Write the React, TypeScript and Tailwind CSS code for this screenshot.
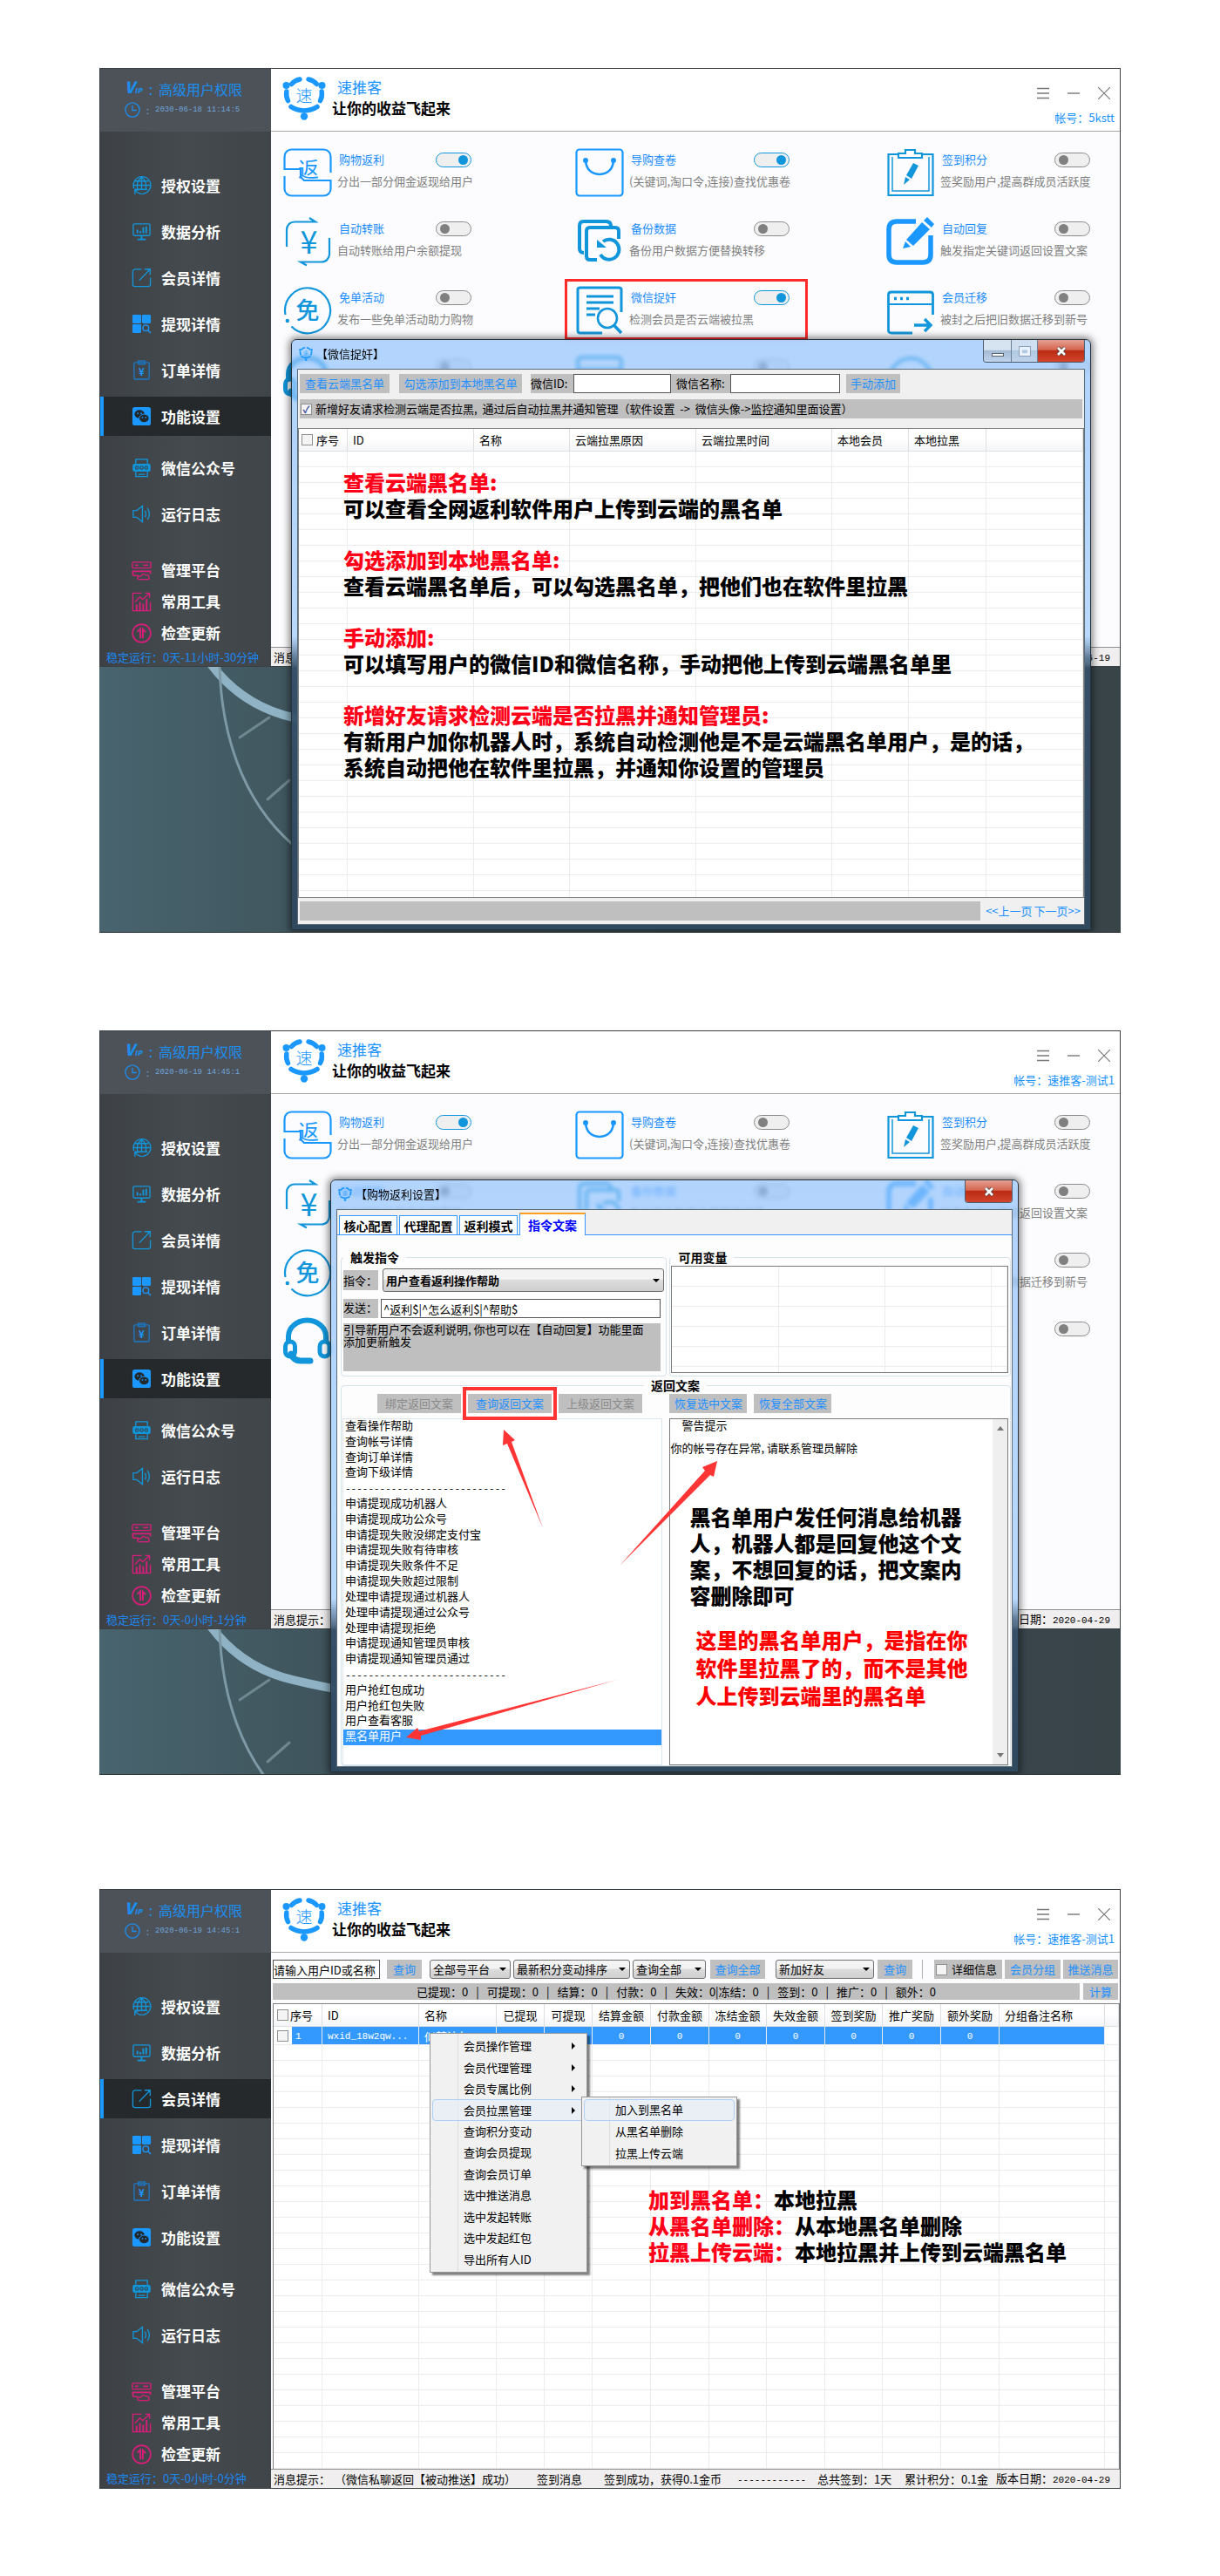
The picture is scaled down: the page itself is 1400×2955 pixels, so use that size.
import React from 'react';
import { clsx } from 'clsx';

type IconProps = { className?: string };

const BLUE = '#1296db';
const BRIGHT = '#1a98ff';

/* ---------- logo and side bar icons ---------- */

function Logo({ className }: IconProps) {
  return (
    <svg viewBox="0 0 50 50" className={className} fill="none" stroke={BRIGHT} strokeLinecap="round">
      <g fill={BRIGHT} stroke="none">
        <circle cx="4.5" cy="10" r="4" />
        <circle cx="45.5" cy="10" r="4" />
        <circle cx="25" cy="45.5" r="4.2" />
      </g>
      <g strokeWidth="5.5">
        <path d="M10.5 8.5Q14.5 4 20 3" />
        <path d="M39.5 8.5Q35.5 4 30 3" />
        <path d="M4.8 17Q4 23 6.5 27.5" />
        <path d="M45.2 17Q46 23 43.5 27.5" />
        <path d="M10 34.5Q16 38.5 25 39Q34 38.5 40 34.5" />
      </g>
      <text x="25" y="29" textAnchor="middle" fontSize="19" fontWeight="300" fill={BRIGHT} stroke="none">速</text>
    </svg>
  );
}

function SideSvg({ children, color = BRIGHT }: { children: React.ReactNode; color?: string }) {
  return (
    <svg viewBox="0 0 24 24" className="size-[23px] shrink-0" fill="none" stroke={color} strokeWidth="1.4">
      {children}
    </svg>
  );
}

const PINK = '#d81e7a';

const sideIcons = {
  globe: (
    <SideSvg color={BLUE}>
      <path d="M3 16A10.3 10.3 0 1 1 22 16Q20 21 13 22.5" />
      <path d="M2 12H22M4 7H20M12 2V18M12 2Q5 8 7 17M12 2Q19 8 17 17M4 17H19" />
      <path d="M4 23V17.5H9M4.5 18Q7 22 13 22.5" />
    </SideSvg>
  ),
  monitor: (
    <SideSvg color={BLUE}>
      <rect x="2" y="3" width="20" height="14" rx="1.5" />
      <path d="M7 14V10M10.5 14V11.5M14 14V7M17.5 14V6" strokeWidth="2" />
      <path d="M12 17V21M7 21.5H17" strokeWidth="2" />
    </SideSvg>
  ),
  member: (
    <SideSvg color={BLUE}>
      <path d="M12 2H4A2.5 2.5 0 0 0 1.5 4.5V20A2.5 2.5 0 0 0 4 22.5H20A2.5 2.5 0 0 0 22.5 20V12" />
      <path d="M9 15.5L22 2M15.5 1.8H22.2V8.5" />
    </SideSvg>
  ),
  blocks: (
    <SideSvg>
      <g fill={BRIGHT} stroke="none">
        <rect x="1" y="1" width="10.5" height="10.5" rx="1.5" />
        <rect x="12.5" y="1" width="10.5" height="10.5" rx="1.5" />
        <rect x="1" y="12.5" width="10.5" height="10.5" rx="1.5" />
      </g>
      <circle cx="17" cy="17" r="3.5" />
      <path d="M19.5 19.5L23 23" />
    </SideSvg>
  ),
  order: (
    <SideSvg color="#1b78c8">
      <rect x="3" y="3" width="18" height="20" rx="1" />
      <rect x="8" y="1" width="8" height="4" />
      <text x="12" y="18.5" textAnchor="middle" fontSize="12" fill="#1b98ff" stroke="none">¥</text>
    </SideSvg>
  ),
  wechat: (
    <SideSvg>
      <rect x="1" y="1" width="22" height="22" rx="3" fill={BRIGHT} stroke="none" />
      <ellipse cx="9.5" cy="9.5" rx="6" ry="5" fill="#22272a" stroke="none" />
      <ellipse cx="15" cy="14.5" rx="6" ry="5" fill="#22272a" stroke={BRIGHT} strokeWidth="1" />
      <g fill={BRIGHT} stroke="none">
        <circle cx="7.5" cy="8.5" r=".9" />
        <circle cx="11.5" cy="8.5" r=".9" />
        <circle cx="13" cy="13.5" r=".9" />
        <circle cx="17" cy="13.5" r=".9" />
      </g>
    </SideSvg>
  ),
  official: (
    <SideSvg color={BLUE}>
      <path d="M5 7V2H19V7M5 17V22.5H19V17M8 20H16" />
      <rect x="2" y="8" width="20" height="8" rx="1.5" fill={BLUE} />
      <g stroke="#2f4450" strokeWidth="1.2">
        <circle cx="6.5" cy="12" r="1.8" />
        <circle cx="12" cy="12" r="1.8" />
        <circle cx="17.5" cy="12" r="1.8" />
      </g>
    </SideSvg>
  ),
  sound: (
    <SideSvg color={BLUE}>
      <path d="M2 8H6L13 2.5V21.5L6 16H2Z" />
      <path d="M16 8Q18.5 12 16 16M19 5Q23.5 12 19 19" />
    </SideSvg>
  ),
  platform: (
    <SideSvg color={PINK}>
      <rect x="1" y="2" width="22" height="7" rx="1" />
      <path d="M4 5.5H8M14 5.5H20M8 18H3Q1.5 18 1.5 16V13H22.5V16" strokeWidth="1.8" />
      <path d="M9 22.5Q6 22 7.5 19.5Q9 18 11 19Q13 14.5 17 17.5Q21 17 20.5 20Q22.5 22.5 19 22.5Z" />
    </SideSvg>
  ),
  tools: (
    <SideSvg color={PINK}>
      <path d="M12 1.5H1.5V22.5H22.5V12" />
      <path d="M6 22V15M10 22V12M14 22V14M18 22V8" strokeWidth="2" />
      <path d="M4 12L10 6L13 9L21 2M16.5 1.5H21.5V7" />
    </SideSvg>
  ),
  update: (
    <SideSvg color={PINK}>
      <circle cx="12" cy="12" r="10.8" strokeWidth="1.7" />
      <path d="M7 10L10.5 6.5V18M13.5 18V7L17 10.5" strokeWidth="2" />
    </SideSvg>
  ),
};

const navGroups: { className: string; itemClass: string; items: { label: string; icon: keyof typeof sideIcons }[] }[] = [
  {
    className: 'gap-2 pt-[39px]',
    itemClass: 'h-[45px]',
    items: [
      { label: '授权设置', icon: 'globe' },
      { label: '数据分析', icon: 'monitor' },
      { label: '会员详情', icon: 'member' },
      { label: '提现详情', icon: 'blocks' },
      { label: '订单详情', icon: 'order' },
      { label: '功能设置', icon: 'wechat' },
    ],
  },
  {
    className: 'gap-2 pt-[14px]',
    itemClass: 'h-[45px]',
    items: [
      { label: '微信公众号', icon: 'official' },
      { label: '运行日志', icon: 'sound' },
    ],
  },
  {
    className: 'pt-6',
    itemClass: 'h-9',
    items: [
      { label: '管理平台', icon: 'platform' },
      { label: '常用工具', icon: 'tools' },
      { label: '检查更新', icon: 'update' },
    ],
  },
];

function Sidebar({ active, time, uptime }: { active: string; time: string; uptime: string }) {
  return (
    <aside className="flex w-[196px] shrink-0 flex-col bg-[linear-gradient(90deg,#3d4145,#444a4e_50%,#404549)]">
      <div className="flex h-[72px] flex-col justify-center gap-px bg-[#4d5258] pb-2 pl-7">
        <div className="flex items-center text-[16px] leading-6 text-[#1b8ef0]">
          <span className="w-[21px] text-[18px] font-black italic leading-6">
            V<span className="text-[8px]">IP</span>
          </span>
          <span className="w-[18px] text-center">:</span>
          <span>高级用户权限</span>
        </div>
        <div className="flex items-center text-[#6fa3d8]">
          <svg viewBox="0 0 20 20" className="size-[18px]" fill="none" stroke="#1b8ef0" strokeWidth="1.5">
            <circle cx="10" cy="10" r="9" />
            <path d="M10 4.5V10.5H15" />
          </svg>
          <span className="w-[17px] text-center text-[11px] leading-4">:</span>
          <span className="font-['Liberation_Mono',monospace] text-[9px] leading-4">{time}</span>
        </div>
      </div>
      <nav>
        {navGroups.map((group, i) => (
          <div key={i} className={clsx('flex flex-col', group.className)}>
            {group.items.map(item => (
              <button
                key={item.label}
                className={clsx(
                  'flex items-center gap-[11px] border-l-4 pl-8 text-[17px] font-bold leading-6 text-white',
                  group.itemClass,
                  item.label === active ? 'border-[#1a98ff] bg-[#25292c]' : 'border-transparent'
                )}
              >
                {sideIcons[item.icon]}
                {item.label}
              </button>
            ))}
          </div>
        ))}
      </nav>
      <p className="h-5 pl-[7px] text-[13px] leading-5 whitespace-nowrap text-[#1a86f0]">稳定运行：{uptime}</p>
    </aside>
  );
}

/* ---------- program window ---------- */

interface AppWindowProps {
  active: string;
  time: string;
  uptime: string;
  account: string;
  status: React.ReactNode;
  children: React.ReactNode;
}

function AppWindow({ active, time, uptime, account, status, children }: AppWindowProps) {
  return (
    <div className="flex border border-[#3a3f43] bg-[#fcfcfe]">
      <Sidebar active={active} time={time} uptime={uptime} />
      <div className="flex min-w-0 flex-1 flex-col">
        <header className="flex h-[72px] shrink-0 items-start border-b border-[#a9a9a9] bg-white pt-[9px] pr-[6px] pl-[13px]">
          <Logo className="size-[50px]" />
          <div className="ml-[7px] flex-1">
            <p className="pl-1.5 text-[17px] leading-6 text-[#1a93ff]">速推客</p>
            <p className="text-[17px] font-bold leading-6 text-black">让你的收益飞起来</p>
          </div>
          <div className="flex flex-col items-end">
            <div className="flex items-center gap-[21px] pt-3 pr-[5px]">
              <button aria-label="菜单">
                <svg viewBox="0 0 14 14" className="size-[14px]" stroke="#777" strokeWidth="1.4">
                  <path d="M0 1.5H14M0 7H14M0 12.5H14" />
                </svg>
              </button>
              <button aria-label="最小化">
                <svg viewBox="0 0 14 14" className="size-[14px]" stroke="#777" strokeWidth="1.4">
                  <path d="M0 7H14" />
                </svg>
              </button>
              <button aria-label="关闭">
                <svg viewBox="0 0 14 14" className="size-[14px]" stroke="#777" strokeWidth="1.2">
                  <path d="M0 0L14 14M14 0L0 14" />
                </svg>
              </button>
            </div>
            <p className="mt-[11px] text-[13px] leading-5 text-[#1a93ff]">帐号：{account}</p>
          </div>
        </header>
        <main className="relative min-h-0 flex-1">{children}</main>
        <footer className="flex h-[22px] shrink-0 items-center border-t border-[#8f8f8f] bg-[#f0eeee] pr-[11px] pl-[3px] text-[13px] leading-5 whitespace-pre text-black">
          {status}
        </footer>
      </div>
    </div>
  );
}

function Mono({ children }: { children: React.ReactNode }) {
  return <span className="font-['Liberation_Mono',monospace] text-[11px]">{children}</span>;
}

/* ---------- feature list ---------- */

function FeatureSvg({ children, color = BLUE }: { children?: React.ReactNode; color?: string }) {
  return (
    <svg viewBox="0 0 56 56" className="size-14 shrink-0" fill="none" stroke={color} strokeWidth="2.2">
      {children}
    </svg>
  );
}

const featureIcons = {
  rebate: (
    <FeatureSvg color={BRIGHT}>
      <path d="M54.5 28V10A8 8 0 0 0 46.5 1.5H9.5A8 8 0 0 0 1.5 10V24H20V34" />
      <path d="M1.5 32V47A8 8 0 0 0 9.5 54.5H46.5A8 8 0 0 0 54.5 47V37H24L20 33" />
      <text x="29" y="33" textAnchor="middle" fontSize="24" fill={BRIGHT} stroke="none">返</text>
    </FeatureSvg>
  ),
  transfer: (
    <FeatureSvg>
      <path d="M4 34V15A9 9 0 0 1 13 5.5H37L30 1" />
      <path d="M53 24V42A9 9 0 0 1 44 51.5H20L27 55.5" />
      <text x="29.5" y="42" textAnchor="middle" fontSize="36" fill={BLUE} stroke="none">¥</text>
    </FeatureSvg>
  ),
  free: (
    <FeatureSvg>
      <path d="M2.5 33A26 26 0 1 1 9.5 46.5" />
      <circle cx="4.8" cy="40" r="2.2" fill={BLUE} stroke="none" />
      <text x="28" y="38" textAnchor="middle" fontSize="27" fontWeight="500" fill={BLUE} stroke="none">免</text>
    </FeatureSvg>
  ),
  headset: (
    <FeatureSvg>
      <path d="M6 30V22A21 18 0 0 1 49 22V30" strokeWidth="6" />
      <rect x="2.5" y="28" width="11" height="17" rx="5.5" strokeWidth="5" />
      <rect x="42" y="28" width="11" height="17" rx="5.5" strokeWidth="5" />
      <path d="M9 42Q12 50 20 50H31" strokeWidth="7" strokeLinecap="round" />
    </FeatureSvg>
  ),
  bag: (
    <FeatureSvg color={BRIGHT}>
      <rect x="1.5" y="1.5" width="53" height="53" rx="3.5" />
      <path d="M12 14Q13 29 28 30Q43 29 44 14" strokeWidth="2.6" />
      <circle cx="12" cy="14" r="3" fill={BRIGHT} stroke="none" />
      <circle cx="44" cy="14" r="3" fill={BRIGHT} stroke="none" />
    </FeatureSvg>
  ),
  backup: (
    <FeatureSvg>
      <path d="M10 41Q5 41 5 36V10Q5 5 10 5H35Q41 5 41 10" strokeWidth="4" />
      <path d="M25 49H17Q13 49 13 45V16Q13 12 17 12H46Q50 12 50 16V25" strokeWidth="4" />
      <path d="M29 43A11.5 11.5 0 1 0 32 28" strokeWidth="4" />
      <path d="M25 26V35H36Z" fill={BLUE} stroke="none" />
    </FeatureSvg>
  ),
  catchSpy: (
    <FeatureSvg>
      <path d="M31 54H6Q3 54 3 51V4Q3 2 6 2H50Q53 2 53 4V30" strokeWidth="3" />
      <path d="M13 12H44M13 19H44M13 26H28M13 33H23" strokeWidth="3" />
      <circle cx="37" cy="37" r="11" strokeWidth="2.6" />
      <path d="M44.5 45L53 54" strokeWidth="3.5" />
    </FeatureSvg>
  ),
  browser: (
    <FeatureSvg>
      <rect x="3" y="3" width="50" height="48" rx="4" strokeWidth="4" />
      <path d="M3 16H53" strokeWidth="3" />
    </FeatureSvg>
  ),
  signIn: (
    <FeatureSvg>
      <path d="M14 7H2.5V54H53.5V7H41" />
      <path d="M7 10V49H49V10" strokeWidth="1.5" />
      <path d="M14 11V6H22V2H33V6H41V11Z" fill="#fff" />
      <g fill={BLUE} stroke="none">
        <path d="M31 17L37 20L29 35L23 31Z" />
        <path d="M22 33L27 36L20 42Z" />
      </g>
    </FeatureSvg>
  ),
  reply: (
    <FeatureSvg color={BRIGHT}>
      <path d="M34 5H12Q3 5 3 14V43Q3 52 12 52H42Q51 52 51 43V21" strokeWidth="5.5" />
      <g fill={BRIGHT} stroke="none">
        <path d="M41 6L50 14L31 33L23 26Z" />
        <path d="M43 4L47 0L55 8L52 12Z" />
        <path d="M22 28L28 34L19 36Z" />
      </g>
    </FeatureSvg>
  ),
  move: (
    <FeatureSvg>
      <path d="M30 54H6Q2.5 54 2.5 51V10Q2.5 7 6 7H50Q53.5 7 53.5 10V33" strokeWidth="2.8" />
      <path d="M3 21H53" />
      <path d="M9 14.5H12M16 14.5H19M23 14.5H26" strokeWidth="3.4" />
      <path d="M32 45H50M44 38L51 45L44 52" strokeWidth="3.4" />
    </FeatureSvg>
  ),
  ring: (
    <FeatureSvg>
      <circle cx="28" cy="28" r="24" strokeWidth="4" />
    </FeatureSvg>
  ),
};

interface Feature {
  icon: keyof typeof featureIcons;
  title?: string;
  desc?: string;
  on?: boolean;
}

const features: Feature[] = [
  { icon: 'rebate', title: '购物返利', desc: '分出一部分佣金返现给用户', on: true },
  { icon: 'bag', title: '导购查卷', desc: '(关键词,淘口令,连接)查找优惠卷', on: true },
  { icon: 'signIn', title: '签到积分', desc: '签奖励用户,提高群成员活跃度' },
  { icon: 'transfer', title: '自动转账', desc: '自动转账给用户余额提现' },
  { icon: 'backup', title: '备份数据', desc: '备份用户数据方便替换转移' },
  { icon: 'reply', title: '自动回复', desc: '触发指定关键词返回设置文案' },
  { icon: 'free', title: '免单活动', desc: '发布一些免单活动助力购物' },
  { icon: 'catchSpy', title: '微信捉奸', desc: '检测会员是否云端被拉黑', on: true },
  { icon: 'move', title: '会员迁移', desc: '被封之后把旧数据迁移到新号' },
  { icon: 'headset' },
  { icon: 'browser' },
  { icon: 'ring' },
];

const textWidths = ['w-[154px]', 'w-[184px]', 'w-[172px]'];

function FeatureGrid({ marked, off = [] }: { marked?: string; off?: string[] }) {
  return (
    <div className="grid grid-cols-[335fr_357fr_268fr] pt-[19px] pl-[14px]">
      {features.map((f, i) => (
        <div key={f.icon} className="relative flex h-[79px] gap-[6px]">
          {featureIcons[f.icon]}
          <div className={clsx('shrink-0', textWidths[i % 3])}>
            <label className="flex h-[26px] items-center justify-between pl-0.5 text-[13px] leading-5 text-[#1a8cff]">
              <span>{f.title}</span>
              <input
                type="checkbox"
                aria-label={f.title ?? '开关'}
                defaultChecked={f.on && !off.includes(f.icon)}
                className="relative h-[17px] w-[41px] appearance-none rounded-full border border-[#8a8a8a] bg-[#efefef] before:absolute before:top-[2px] before:left-[4px] before:size-[11px] before:rounded-full before:bg-[#808080] checked:border-[#1296db] checked:before:left-[25px] checked:before:bg-[#1296db]"
              />
            </label>
            <p className="text-[13px] leading-6 whitespace-nowrap text-[#808080]">{f.desc}</p>
          </div>
          {marked === f.icon && <span className="absolute -top-2 -left-3 h-[70px] w-[279px] border-[3px] border-[#ff2a2a]" />}
        </div>
      ))}
    </div>
  );
}

/* ---------- desktop and glass dialogs ---------- */

function Wallpaper() {
  return (
    <svg
      viewBox="0 0 270 300"
      className="absolute top-[687px] left-0 h-[300px] w-[270px]"
      fill="none"
      strokeLinecap="round"
      aria-hidden="true"
    >
      <path d="M126 -6Q162 44 222 58T290 70" stroke="#8fb3c4" strokeWidth="10" strokeLinecap="butt" />
      <path d="M138 0C140 70 160 150 222 204" stroke="#7d99a5" strokeWidth="3" />
      <path d="M195 58L161 81M218 130L193 152" stroke="#6f8790" strokeWidth="3" />
    </svg>
  );
}

function Desktop({ className, children }: { className?: string; children: React.ReactNode }) {
  return (
    <section
      className={clsx(
        'relative overflow-hidden border-b border-[#20282c] bg-[linear-gradient(90deg,#48646e,#3e525a_25%,#39464d_80%,#394449)]',
        className
      )}
    >
      <Wallpaper />
      <div className="relative h-full">{children}</div>
    </section>
  );
}

interface DialogProps {
  title: string;
  className: string;
  resizable?: boolean;
  children: React.ReactNode;
}

function Dialog({ title, className, resizable, children }: DialogProps) {
  return (
    <div
      role="dialog"
      aria-label={title}
      className={clsx(
        'absolute flex flex-col rounded-t-md border border-[#26323c] px-[6px] pb-[5px] shadow-[0_0_8px_2px_#00000080] backdrop-blur-[2px]',
        className
      )}
    >
      <div className="flex h-[33px] shrink-0 items-start">
        <Logo className="mt-2 ml-0.5 size-4" />
        <span className="mt-1.5 ml-1 flex-1 text-[13px] leading-5 text-black">【{title}】</span>
        <div className="flex h-[26px] overflow-hidden rounded-b border border-t-0 border-[#4e5e70]">
          {resizable && (
            <>
              <button aria-label="最小化" className="flex w-8 items-end justify-center border-r border-[#6b7f95] bg-[linear-gradient(#d6e3f1_45%,#a5bbd4_50%,#bfd4ec)] pb-1.5">
                <span className="h-1 w-3.5 border border-[#59636e] bg-white" />
              </button>
              <button aria-label="最大化" className="flex w-[30px] items-center justify-center border-r border-[#6b7f95] bg-[linear-gradient(#cfdff0_45%,#b0c8e2_50%,#bfd4ec)]">
                <span className="h-[10px] w-3 border-[3px] border-[#e9f1fa] outline outline-[#8ba0b8]" />
              </button>
            </>
          )}
          <button aria-label="关闭" className="flex w-[53px] items-center justify-center bg-[linear-gradient(#e5a093,#d5654f_45%,#bc2b13_50%,#d0452c)]">
            <svg viewBox="0 0 14 12" className="h-3 w-3.5">
              <path d="M3 2L11 10M11 2L3 10" stroke="#4b3b3b" strokeWidth="4.5" />
              <path d="M3 2L11 10M11 2L3 10" stroke="#fff" strokeWidth="2.8" />
            </svg>
          </button>
        </div>
      </div>
      <div className="flex min-h-0 flex-1 flex-col border border-[#5d6b78] bg-[#f0f0f0]">{children}</div>
    </div>
  );
}

function FlatButton({ className, disabled, children }: { className?: string; disabled?: boolean; children: React.ReactNode }) {
  return (
    <button
      disabled={disabled}
      className={clsx(
        'h-[22px] shrink-0 bg-[#bfbfbf] text-[13px] leading-5 whitespace-nowrap',
        disabled ? 'text-[#8a8a8a]' : 'text-[#1e90ff]',
        className
      )}
    >
      {children}
    </button>
  );
}

function CheckBox({ label, checked }: { label: string; checked?: boolean }) {
  return (
    <input
      type="checkbox"
      aria-label={label}
      defaultChecked={checked}
      className="size-[13px] shrink-0 appearance-none border border-[#8e8f8f] bg-[#f4f4f4] text-center text-[11px] leading-[11px] font-bold text-[#31479e] checked:before:block checked:before:content-['✓']"
    />
  );
}

/* ---------- 微信捉奸 dialog ---------- */

const cloudColumns = [
  { label: '序号', width: 'w-[56px]' },
  { label: 'ID', width: 'w-[145px]' },
  { label: '名称', width: 'w-[110px]' },
  { label: '云端拉黑原因', width: 'w-[145px]' },
  { label: '云端拉黑时间', width: 'w-[156px]' },
  { label: '本地会员', width: 'w-[88px]' },
  { label: '本地拉黑', width: 'w-[89px]' },
  { label: '', width: '' },
];

const headCell = 'h-[26px] border-r border-b border-[#dedfe1] bg-[linear-gradient(#fff_45%,#f4f5f8)] p-0 font-normal';
const bodyCell = 'h-[18px] border-r border-b border-[#ececec] p-0';

const notes = [
  { head: '查看云端黑名单:', body: ['可以查看全网返利软件用户上传到云端的黑名单'] },
  { head: '勾选添加到本地黑名单:', body: ['查看云端黑名单后，可以勾选黑名单，把他们也在软件里拉黑'] },
  { head: '手动添加:', body: ['可以填写用户的微信ID和微信名称，手动把他上传到云端黑名单里'] },
  {
    head: '新增好友请求检测云端是否拉黑并通知管理员:',
    body: ['有新用户加你机器人时，系统自动检测他是不是云端黑名单用户，是的话，', '系统自动把他在软件里拉黑，并通知你设置的管理员'],
  },
];

function BlacklistDialog() {
  return (
    <Dialog
      title="微信捉奸"
      resizable
      className="top-[311px] right-[34px] bottom-[2px] left-[220px] bg-[linear-gradient(#90c2fcb0_0,#a8cffcd0_340px,#35506ae8_376px,#2f495f)]"
    >
      <div className="flex items-center px-0.5 pt-[5px] text-[13px] leading-5 text-black">
        <FlatButton className="w-[103px]">查看云端黑名单</FlatButton>
        <FlatButton className="ml-[11px] w-[141px]">勾选添加到本地黑名单</FlatButton>
        <label className="ml-[10px] flex h-[22px] items-center bg-[#bfbfbf]">
          <span className="w-[49px]">微信ID:</span>
          <input className="h-[22px] w-[112px] border border-[#555] bg-white px-1" />
        </label>
        <label className="flex h-[22px] items-center bg-[#bfbfbf]">
          <span className="w-[68px] pl-1.5">微信名称:</span>
          <input className="h-[22px] w-[126px] border border-[#555] bg-white px-1" />
        </label>
        <FlatButton className="ml-[7px] w-[62px]">手动添加</FlatButton>
      </div>
      <label className="mx-0.5 mt-[7px] flex h-[22px] items-center gap-1 bg-[#bfbfbf] pl-px text-[13px] leading-5 whitespace-pre text-black">
        <CheckBox label="自动拉黑" checked />
        新增好友请求检测云端是否拉黑,  通过后自动拉黑并通知管理（软件设置  -&gt;  微信头像-&gt;监控通知里面设置）
      </label>
      <div className="relative mt-[11px] min-h-0 flex-1 overflow-hidden border border-[#7f8183] bg-white">
        <table className="w-full table-fixed border-separate border-spacing-0 text-left text-[13px] leading-5 text-black">
          <thead>
            <tr>
              {cloudColumns.map((c, i) => (
                <th key={i} className={clsx(headCell, c.width, i === 0 ? 'pl-[3px]' : 'pl-1.5')}>
                  {i === 0 ? (
                    <span className="flex items-center gap-1">
                      <CheckBox label="全选" />
                      {c.label}
                    </span>
                  ) : (
                    c.label
                  )}
                </th>
              ))}
            </tr>
          </thead>
          <tbody>
            {Array.from({ length: 29 }, (_, r) => (
              <tr key={r}>
                {cloudColumns.map((_c, i) => (
                  <td key={i} className={bodyCell} />
                ))}
              </tr>
            ))}
          </tbody>
        </table>
        <div className="absolute top-[46px] left-[51px] flex flex-col gap-[29px] text-[24px] leading-[30px] font-black whitespace-nowrap text-black">
          {notes.map(n => (
            <div key={n.head}>
              <p className="text-[#ff0018]">{n.head}</p>
              {n.body.map(line => (
                <p key={line}>{line}</p>
              ))}
            </div>
          ))}
        </div>
      </div>
      <div className="flex shrink-0 items-center gap-1.5 py-1 pr-1 pl-0.5 text-[13px] leading-5">
        <span className="h-[22px] flex-1 bg-[#bfbfbf]" />
        <span className="flex gap-0.5 whitespace-nowrap text-[#1e90ff]">
          <a href="#prev">&lt;&lt;上一页</a>
          <a href="#next">下一页&gt;&gt;</a>
        </span>
      </div>
    </Dialog>
  );
}

/* ---------- 购物返利设置 dialog ---------- */

const dashes = '----------------------------';

const replies = [
  '查看操作帮助',
  '查询帐号详情',
  '查询订单详情',
  '查询下级详情',
  dashes,
  '申请提现成功机器人',
  '申请提现成功公众号',
  '申请提现失败没绑定支付宝',
  '申请提现失败有待审核',
  '申请提现失败条件不足',
  '申请提现失败超过限制',
  '处理申请提现通过机器人',
  '处理申请提现通过公众号',
  '处理申请提现拒绝',
  '申请提现通知管理员审核',
  '申请提现通知管理员通过',
  dashes,
  '用户抢红包成功',
  '用户抢红包失败',
  '用户查看客服',
  '黑名单用户',
];

const groupBox = 'min-w-0 rounded border border-[#d5e3ea]';
const groupTitle = 'px-2 text-[14px] leading-5 font-bold text-black';

function Select({ label, options, className }: { label: string; options: string[]; className?: string }) {
  return (
    <span className={clsx('relative shrink-0', className)}>
      <select
        aria-label={label}
        className="size-full appearance-none rounded-[3px] border border-[#707070] bg-[linear-gradient(#f3f3f3_45%,#dcdcdc_50%,#cfcfcf)] pl-[3px] leading-5 text-black"
      >
        {options.map(o => (
          <option key={o}>{o}</option>
        ))}
      </select>
      <svg viewBox="0 0 8 4" className="pointer-events-none absolute top-1/2 right-[5px] -mt-0.5 h-1 w-2">
        <path d="M0 0H8L4 4Z" />
      </svg>
    </span>
  );
}

function RebateDialog() {
  return (
    <Dialog
      title="购物返利设置"
      className="top-[171px] right-[117px] bottom-[2px] left-[265px] bg-[linear-gradient(#90c2fcb0_0,#a8cffcd0_480px,#35506ae8_516px,#2f495f)]"
    >
      <div role="tablist" className="flex h-[29px] shrink-0 items-end border-b border-[#3399ff] pl-0.5 text-[14px] leading-5 font-bold text-black">
        {['核心配置', '代理配置', '返利模式'].map(t => (
          <button key={t} role="tab" className="mr-0.5 h-[22px] w-[67px] border border-b-0 border-[#3399ff] bg-white">
            {t}
          </button>
        ))}
        <button
          role="tab"
          aria-selected
          className="-mb-px h-[26px] w-[76px] border border-t-2 border-b-0 border-[#3399ff] border-t-[#ffa020] bg-white text-[#0000ff]"
        >
          指令文案
        </button>
      </div>
      <div className="flex min-h-0 flex-1 flex-col bg-[#fdfdfe] pt-[15px] pr-px pl-1">
        <div className="grid shrink-0 grid-cols-[374fr_391fr] gap-[3px] text-[13px] leading-5 text-black">
          <fieldset className={clsx(groupBox, 'px-0.5 pb-1')}>
            <legend className={groupTitle}>触发指令</legend>
            <div className="flex items-center gap-[5px] pt-[3px]">
              <span className="h-[23px] w-10 bg-[#bfbfbf] leading-[23px]">指令：</span>
              <Select label="指令" options={['用户查看返利操作帮助']} className="h-[27px] flex-1 font-bold" />
            </div>
            <label className="mt-2 flex gap-[3px] pr-1">
              <span className="h-[22px] w-10 bg-[#bfbfbf]">发送：</span>
              <input defaultValue="^返利$|^怎么返利$|^帮助$" className="h-[22px] min-w-0 flex-1 border border-[#555] bg-white px-0.5" />
            </label>
            <p className="mt-1.5 mr-1 h-[55px] bg-[#bfbfbf] text-[13px] leading-[14px]">
              引导新用户不会返利说明, 你也可以在【自动回复】功能里面
              <br />
              添加更新触发
            </p>
          </fieldset>
          <fieldset className={clsx(groupBox, 'pr-0.5 pb-[3px] pl-px')}>
            <legend className={groupTitle}>可用变量</legend>
            <div className="h-[123px] overflow-hidden border border-[#7b7b7b] bg-white">
              <table className="w-full table-fixed border-separate border-spacing-0">
                <tbody>
                  {Array.from({ length: 6 }, (_, r) => (
                    <tr key={r}>
                      {['w-[123px]', 'w-[122px]', 'w-[122px]', ''].map((w, i) => (
                        <td key={i} className={clsx('h-[23px] border-r border-b border-[#ececec] p-0', w)} />
                      ))}
                    </tr>
                  ))}
                </tbody>
              </table>
            </div>
          </fieldset>
        </div>
        <fieldset className={clsx(groupBox, 'grid flex-1 grid-cols-[367fr_388fr] grid-rows-[22px_398px] gap-x-2 gap-y-1.5 pr-0.5 pl-px')}>
          <legend className={clsx(groupTitle, 'mx-auto')}>返回文案</legend>
          <div className="flex gap-2 pl-10">
            <FlatButton disabled className="w-24">绑定返回文案</FlatButton>
            <span className="relative flex">
              <FlatButton className="w-24">查询返回文案</FlatButton>
              <span className="absolute -inset-x-1.5 -inset-y-2 border-4 border-[#ff3434]" />
            </span>
            <FlatButton disabled className="w-24">上级返回文案</FlatButton>
          </div>
          <div className="flex gap-2">
            <FlatButton className="w-[89px]">恢复选中文案</FlatButton>
            <FlatButton className="w-[89px]">恢复全部文案</FlatButton>
          </div>
          <div className="border border-[#dde6ec] bg-white">
            <ul role="listbox" aria-label="返回文案" className="grid h-[374px] auto-rows-fr text-[13px] leading-[14px] text-black">
              {replies.map((r, i) => (
                <li
                  key={i}
                  role="option"
                  aria-selected={i === 20}
                  className={clsx('pl-0.5', i === 20 && 'bg-[#3399ff] text-white')}
                >
                  {r === dashes ? <Mono>{r}</Mono> : r}
                </li>
              ))}
            </ul>
          </div>
          <div className="relative flex border border-[#7b7b7b] bg-white">
            <p className="flex-1 text-[13px] leading-[27px] text-black">
              <span className="block h-[19px] pl-[13px] leading-[14px]">警告提示</span>
              你的帐号存在异常, 请联系管理员解除
            </p>
            <span className="flex w-[17px] flex-col items-center justify-between bg-[#efefef] py-2">
              <svg viewBox="0 0 8 5" className="h-[5px] w-2" fill="#777"><path d="M0 5H8L4 0Z" /></svg>
              <svg viewBox="0 0 8 5" className="h-[5px] w-2" fill="#777"><path d="M0 0H8L4 5Z" /></svg>
            </span>
            <div className="absolute top-[97px] left-[22px] text-[24px] font-black whitespace-nowrap">
              <p className="leading-[30px] text-black">
                黑名单用户发任何消息给机器<br />
                人，机器人都是回复他这个文<br />
                案，不想回复的话，把文案内<br />
                容删除即可
              </p>
              <p className="mt-5 pl-[7px] leading-8 text-[#ff0000]">
                这里的黑名单用户，是指在你<br />
                软件里拉黑了的，而不是其他<br />
                人上传到云端里的黑名单
              </p>
            </div>
          </div>
        </fieldset>
      </div>
      <svg className="pointer-events-none absolute inset-0 size-full" fill="#ff3434" aria-hidden="true">
        <path d="M198 286L211 298L207 300L243 399L202 302L197 304Z" />
        <path d="M443 322L439 340L435 338L331 442L429 333L426 329Z" />
        <path d="M86 639L99 628L101 632L328 573L103 637L103 642Z" />
      </svg>
    </Dialog>
  );
}

/* ---------- member page ---------- */

const memberColumns = [
  { label: '序号', width: 'w-[56px]' },
  { label: 'ID', width: 'w-[111px]', left: true },
  { label: '名称', width: 'w-[89px]', left: true },
  { label: '已提现', width: 'w-[55px]' },
  { label: '可提现', width: 'w-[55px]' },
  { label: '结算金额', width: 'w-[67px]' },
  { label: '付款金额', width: 'w-[67px]' },
  { label: '冻结金额', width: 'w-[66px]' },
  { label: '失效金额', width: 'w-[67px]' },
  { label: '签到奖励', width: 'w-[66px]' },
  { label: '推广奖励', width: 'w-[67px]' },
  { label: '额外奖励', width: 'w-[67px]' },
  { label: '分组备注名称', width: 'w-[121px]', left: true },
  { label: '', width: '' },
];

const member = ['1', 'wxid_18w2qw...', '似梦流年', '0', '0', '0', '0', '0', '0', '0', '0', '0', ''];

const totals = ['已提现：0', '可提现：0', '结算：0', '付款：0', '失效：0|冻结：0', '签到：0', '推广：0', '额外：0'];

const menuItems = [
  '会员操作管理',
  '会员代理管理',
  '会员专属比例',
  '会员拉黑管理',
  '查询积分变动',
  '查询会员提现',
  '查询会员订单',
  '选中推送消息',
  '选中发起转账',
  '选中发起红包',
  '导出所有人ID',
];

const menuBox = 'absolute border border-[#979797] bg-[linear-gradient(90deg,#f1f1f1_31px,#dcdcdc_31px,#dcdcdc_32px,#f1f1f1_32px)] p-0.5 text-[13px] leading-5 text-black shadow-[3px_3px_2px_#00000080]';

function ContextMenu() {
  return (
    <>
      <ul role="menu" className={clsx(menuBox, 'top-[92px] left-[182px] grid h-[275px] w-[181px] auto-rows-fr')}>
        {menuItems.map((m, i) => (
          <li key={m} className="grid">
            <button
              role="menuitem"
              className={clsx(
                'flex items-center justify-between rounded-sm border pr-2.5 pl-[35px]',
                i === 3 ? 'border-[#aecff7] bg-[#e6eefa99]' : 'border-transparent'
              )}
            >
              {m}
              {i < 4 && (
                <svg viewBox="0 0 4 8" className="h-2 w-1"><path d="M0 0V8L4 4Z" /></svg>
              )}
            </button>
          </li>
        ))}
      </ul>
      <ul role="menu" className={clsx(menuBox, 'top-[165px] left-[356px] grid h-[80px] w-[179px] auto-rows-fr')}>
        {['加入到黑名单', '从黑名单删除', '拉黑上传云端'].map((m, i) => (
          <li key={m} className="grid">
            <button
              role="menuitem"
              className={clsx('flex items-center rounded-sm border pl-[35px]', i === 0 ? 'border-[#aecff7] bg-[#e6eefa99]' : 'border-transparent')}
            >
              {m}
            </button>
          </li>
        ))}
      </ul>
    </>
  );
}

function MemberPage() {
  return (
    <div className="flex h-full flex-col pt-2 pl-0.5 text-[13px] leading-5 text-black">
      <div className="flex items-center pr-[2px]">
        <input aria-label="用户" defaultValue="请输入用户ID或名称" className="h-[22px] w-[123px] border border-[#555] bg-white" />
        <FlatButton className="ml-2 w-10">查询</FlatButton>
        <Select label="平台" options={['全部号平台']} className="ml-[9px] h-[22px] w-[93px]" />
        <Select label="排序" options={['最新积分变动排序']} className="ml-[3px] h-[22px] w-[134px]" />
        <Select label="范围" options={['查询全部']} className="ml-[3px] h-[22px] w-[84px]" />
        <FlatButton className="ml-[5px] w-[63px]">查询全部</FlatButton>
        <Select label="好友" options={['新加好友']} className="ml-3 h-[22px] w-[113px]" />
        <FlatButton className="ml-1 w-10">查询</FlatButton>
        <span className="ml-[11px] h-[22px] w-px bg-[#b0b0b0]" />
        <label className="ml-auto flex h-[22px] w-[78px] items-center gap-[5px] bg-[#bfbfbf] pl-0.5">
          <CheckBox label="详细信息" />
          详细信息
        </label>
        <FlatButton className="ml-[3px] w-16">会员分组</FlatButton>
        <FlatButton className="ml-[3px] w-[63px]">推送消息</FlatButton>
      </div>
      <div className="mt-[5px] flex gap-1 pr-[2px] leading-[19px]">
        <div className="flex h-[19px] flex-1 justify-center gap-[9px] bg-[#bfbfbf]">
          {totals.map((t, i) => (
            <React.Fragment key={t}>
              {i > 0 && <span>|</span>}
              <span>{t}</span>
            </React.Fragment>
          ))}
        </div>
        <button className="h-[19px] w-10 bg-[#bfbfbf] text-[#1e90ff]">计算</button>
      </div>
      <div className="mt-1 min-h-0 flex-1 border border-b-0 border-[#7f8183] bg-white">
        <table className="w-full table-fixed border-separate border-spacing-0 text-center">
          <thead>
            <tr>
              {memberColumns.map((c, i) => (
                <th key={i} className={clsx(headCell, c.width, c.left && 'pl-1.5 text-left')}>
                  {i === 0 ? (
                    <span className="flex items-center gap-0.5 pl-1">
                      <CheckBox label="全选" />
                      {c.label}
                    </span>
                  ) : (
                    c.label
                  )}
                </th>
              ))}
            </tr>
          </thead>
          <tbody>
            <tr className="text-white">
              {member.map((v, i) =>
                i === 0 ? (
                  <td key={i} className={bodyCell}>
                    <span className="flex items-center gap-1 pl-1 leading-[17px]">
                      <CheckBox label="选择会员" />
                      <span className="flex-1 bg-[#3399ff] pl-1 text-left"><Mono>{v}</Mono></span>
                    </span>
                  </td>
                ) : (
                  <td key={i} className={clsx(bodyCell, 'bg-[#3399ff] leading-[17px]', memberColumns[i].left && 'pl-1.5 text-left')}>
                    {i === 2 ? v : <Mono>{v}</Mono>}
                  </td>
                )
              )}
              <td className={bodyCell} />
            </tr>
            {Array.from({ length: 27 }, (_, r) => (
              <tr key={r}>
                {memberColumns.map((_c, i) => (
                  <td key={i} className={bodyCell} />
                ))}
              </tr>
            ))}
          </tbody>
        </table>
      </div>
      <ContextMenu />
      <div className="absolute top-[268px] left-[433px] text-[24px] leading-[30px] font-black whitespace-nowrap text-black">
        <p><span className="text-[#ff0018]">加到黑名单：</span>本地拉黑</p>
        <p><span className="text-[#ff0018]">从黑名单删除：</span>从本地黑名单删除</p>
        <p><span className="text-[#ff0018]">拉黑上传云端：</span>本地拉黑并上传到云端黑名单</p>
      </div>
    </div>
  );
}

function Version({ date }: { date: string }) {
  return (
    <span className="ml-auto">
      版本日期：<Mono>{date}</Mono>
    </span>
  );
}

export default function App() {
  return (
    <div className="bg-white px-[114px] pt-[78px] pb-[99px] font-['Noto_Sans_CJK_SC',sans-serif]">
      <Desktop className="h-[992px]">
        <AppWindow
          active="功能设置"
          time="2030-06-18 11:14:5"
          uptime="0天-11小时-30分钟"
          account="5kstt"
          status={<><span>消息提示：</span><Version date="2020-06-19" /></>}
        >
          <FeatureGrid marked="catchSpy" />
        </AppWindow>
        <BlacklistDialog />
      </Desktop>
      <Desktop className="mt-[112px] h-[854px]">
        <AppWindow
          active="功能设置"
          time="2020-06-19 14:45:1"
          uptime="0天-0小时-1分钟"
          account="速推客-测试1"
          status={<><span>消息提示：</span><Version date="2020-04-29" /></>}
        >
          <FeatureGrid off={['bag', 'catchSpy']} />
        </AppWindow>
        <RebateDialog />
      </Desktop>
      <section className="mt-[131px]">
        <AppWindow
          active="会员详情"
          time="2020-06-19 14:45:1"
          uptime="0天-0小时-0分钟"
          account="速推客-测试1"
          status={
            <>
              <span className="w-[70px]">消息提示：</span>
              <span className="w-[232px]">（微信私聊返回【被动推送】成功）</span>
              <span className="w-[77px]">签到消息</span>
              <span className="w-[153px]">签到成功，获得0.1金币</span>
              <span className="w-[92px]"><Mono>------------</Mono></span>
              <span className="w-[100px]">总共签到：1天</span>
              <span>累计积分：0.1金</span>
              <Version date="2020-04-29" />
            </>
          }
        >
          <MemberPage />
        </AppWindow>
      </section>
    </div>
  );
}
